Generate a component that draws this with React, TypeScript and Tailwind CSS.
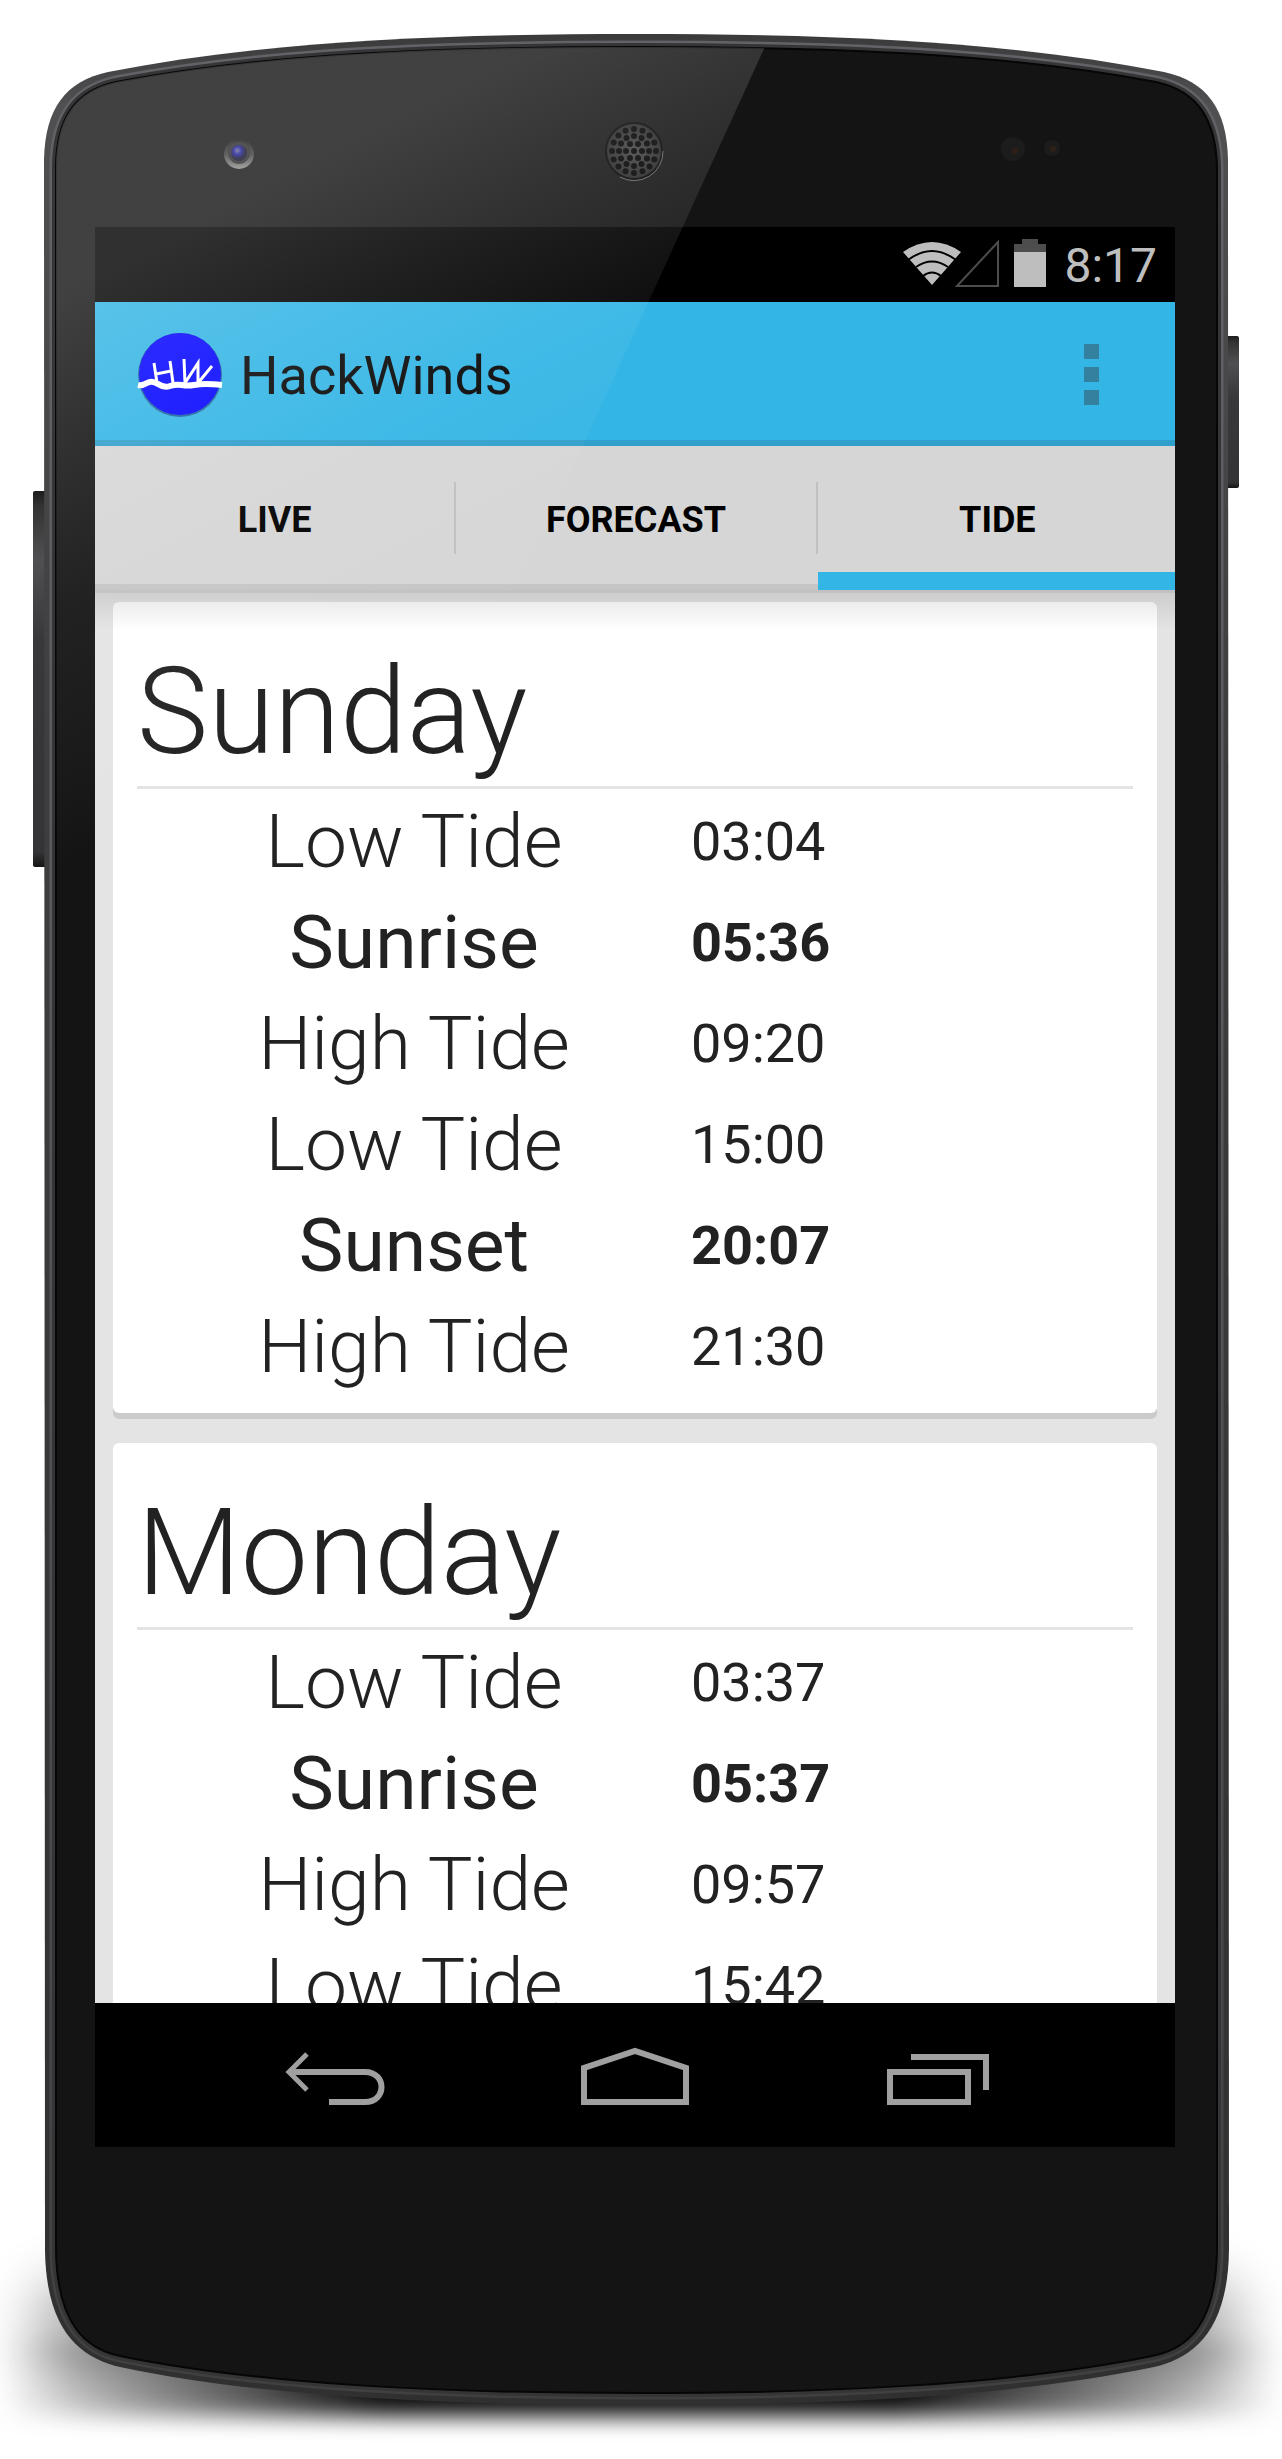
const ROBOTO = "font-['Roboto',sans-serif]";

type Entry = { label: string; time: string; sun?: boolean };
type Day = { name: string; entries: Entry[] };

const days: Day[] = [
  {
    name: 'Sunday',
    entries: [
      { label: 'Low Tide', time: '03:04' },
      { label: 'Sunrise', time: '05:36', sun: true },
      { label: 'High Tide', time: '09:20' },
      { label: 'Low Tide', time: '15:00' },
      { label: 'Sunset', time: '20:07', sun: true },
      { label: 'High Tide', time: '21:30' },
    ],
  },
  {
    name: 'Monday',
    entries: [
      { label: 'Low Tide', time: '03:37' },
      { label: 'Sunrise', time: '05:37', sun: true },
      { label: 'High Tide', time: '09:57' },
      { label: 'Low Tide', time: '15:42' },
    ],
  },
];

const tabs = ['LIVE', 'FORECAST', 'TIDE'];

const OUTER =
  'M44 160 C45 108 66 81 108 72 C260 42 430 34 636 34 C842 34 1012 42 1164 72 C1206 81 1227 108 1228 160 L1229 2250 C1228 2330 1194 2358 1154 2367 C1010 2397 830 2405 638 2405 C445 2405 260 2397 120 2367 C80 2358 46 2330 45 2250 Z';
const FACE =
  'M56 168 C56 120 74 91 116 82 C265 54 430 47 636 47 C842 47 1006 54 1156 82 C1198 91 1216 120 1217 168 L1217 2250 C1216 2324 1188 2349 1152 2356 C1010 2385 830 2393 638 2393 C445 2393 262 2385 120 2356 C86 2349 57 2324 56 2250 Z';

const rings = [
  { r: 0, n: 1 },
  { r: 8, n: 6 },
  { r: 15, n: 12 },
  { r: 22, n: 16 },
];
const holes = rings.flatMap(({ r, n }) =>
  Array.from({ length: n }, (_, i) => {
    const a = (i * 2 * Math.PI) / n;
    return { x: 634 + r * Math.cos(a), y: 151 + r * Math.sin(a) };
  }),
);

function DeviceBody() {
  return (
    <svg
      aria-hidden="true"
      viewBox="0 0 1282 2459"
      preserveAspectRatio="none"
      className="absolute inset-0 h-full w-full"
    >
      <defs>
        <linearGradient id="button" x1="0" y1="0" x2="0" y2="1">
          <stop offset="0" stopColor="#1c1c1c" />
          <stop offset="0.04" stopColor="#333" />
          <stop offset="0.18" stopColor="#505052" />
          <stop offset="0.4" stopColor="#38383a" />
          <stop offset="0.96" stopColor="#343436" />
          <stop offset="1" stopColor="#151515" />
        </linearGradient>
        <linearGradient id="rim" x1="0" y1="0" x2="0" y2="1">
          <stop offset="0" stopColor="#3a3a3b" />
          <stop offset="0.03" stopColor="#505053" />
          <stop offset="0.3" stopColor="#3e3e40" />
          <stop offset="1" stopColor="#303031" />
        </linearGradient>
        <linearGradient id="shine" x1="0" y1="0" x2="0" y2="1">
          <stop offset="0" stopColor="#636367" />
          <stop offset="0.4" stopColor="#59595d" />
          <stop offset="1" stopColor="#404041" />
        </linearGradient>
        <linearGradient id="fade" x1="0" y1="0" x2="1" y2="0">
          <stop offset="0" stopColor="#000" stopOpacity="0" />
          <stop offset="0.12" stopColor="#000" stopOpacity="0.4" />
          <stop offset="0.3" stopColor="#000" stopOpacity="0.95" />
          <stop offset="0.7" stopColor="#000" stopOpacity="0.95" />
          <stop offset="0.88" stopColor="#000" stopOpacity="0.4" />
          <stop offset="1" stopColor="#000" stopOpacity="0" />
        </linearGradient>
        <radialGradient id="speaker">
          <stop offset="0" stopColor="#454545" />
          <stop offset="1" stopColor="#262626" />
        </radialGradient>
        <radialGradient id="lens" cx="0.4" cy="0.35">
          <stop offset="0" stopColor="#6c6f9c" />
          <stop offset="0.5" stopColor="#1c1c96" />
          <stop offset="1" stopColor="#14142c" />
        </radialGradient>
        <linearGradient id="lensRing" x1="0" y1="0" x2="0" y2="1">
          <stop offset="0" stopColor="#161616" />
          <stop offset="0.5" stopColor="#3b3b3b" />
          <stop offset="1" stopColor="#8d8d8b" />
        </linearGradient>
        <filter id="soft" x="-20%" y="-60%" width="140%" height="220%">
          <feGaussianBlur stdDeviation="11" />
        </filter>
        <filter id="softer" x="-20%" y="-100%" width="140%" height="300%">
          <feGaussianBlur stdDeviation="28" />
        </filter>
      </defs>
      <rect x="34" y="2280" width="1206" height="96" rx="40" fill="#000" opacity="0.32" filter="url(#softer)" />
      <rect x="0" y="2340" width="1282" height="76" fill="url(#fade)" filter="url(#soft)" />
      <rect x="33" y="491" width="14" height="376" rx="2" fill="url(#button)" />
      <rect x="1226" y="336" width="13" height="152" rx="2" fill="url(#button)" />
      <path d={OUTER} fill="url(#rim)" />
      <path d={FACE} fill="none" stroke="url(#shine)" strokeWidth="13" />
      <path d={FACE} fill="none" stroke="#353537" strokeWidth="8" />
      <path d={FACE} fill="#141414" stroke="#060606" strokeWidth="2" />
      <circle cx="239" cy="154" r="15" fill="url(#lensRing)" />
      <circle cx="239" cy="153" r="11" fill="#2c2c2e" />
      <circle cx="239" cy="153" r="8" fill="url(#lens)" />
      <circle cx="634" cy="151" r="28" fill="url(#speaker)" stroke="#050505" strokeWidth="2" />
      <path d="M620 177 A29 29 0 0 0 663 151" fill="none" stroke="#666" strokeWidth="1" />
      {holes.map((h, i) => (
        <circle key={i} cx={h.x} cy={h.y} r="3" fill="#000" />
      ))}
      <circle cx="1013" cy="149" r="12" fill="#1c1c1c" />
      <circle cx="1015" cy="151" r="3" fill="#2e1f17" />
      <circle cx="1052" cy="148" r="8" fill="#1c1c1c" />
      <circle cx="1053" cy="149" r="3" fill="#2e1f17" />
    </svg>
  );
}

function Glare() {
  return (
    <svg
      aria-hidden="true"
      viewBox="0 0 1282 2459"
      preserveAspectRatio="none"
      className="pointer-events-none absolute inset-0 h-full w-full"
    >
      <defs>
        <linearGradient id="glare" gradientUnits="userSpaceOnUse" x1="70" y1="290" x2="302" y2="745">
          <stop offset="0" stopColor="#fff" stopOpacity="0.19" />
          <stop offset="0.26" stopColor="#fff" stopOpacity="0.125" />
          <stop offset="0.54" stopColor="#fff" stopOpacity="0.06" />
          <stop offset="0.8" stopColor="#fff" stopOpacity="0.03" />
          <stop offset="1" stopColor="#fff" stopOpacity="0" />
        </linearGradient>
        <clipPath id="face">
          <path d={FACE} />
        </clipPath>
      </defs>
      <path d="M50 40 H768 L330 1000 H50 Z" fill="url(#glare)" clipPath="url(#face)" />
    </svg>
  );
}

function StatusBar() {
  return (
    <div className="flex h-[75px] shrink-0 items-center justify-end bg-black pb-[3px] pr-[18px] text-[#bebebe]">
      <svg role="img" aria-label="Wi-Fi" viewBox="0 0 60 48" className="h-12 w-[60px]">
        <path d="M1 13 Q30 -7 59 13 L30 46 Z" fill="currentColor" />
        <g fill="none" stroke="#000" strokeWidth="2">
          <path d="M6 21 Q30 3 54 21" />
          <path d="M14 28 Q30 17 46 28" />
          <path d="M21 37 Q30 30 39 37" />
        </g>
      </svg>
      <svg role="img" aria-label="No signal" viewBox="0 0 46 50" className="-ml-2 h-[50px] w-[46px]">
        <path d="M3 48 H44 V4 Z" fill="none" stroke="#4d4d4d" strokeWidth="2" />
      </svg>
      <svg role="img" aria-label="Battery" viewBox="0 0 32 48" className="ml-[14px] h-12 w-8">
        <path d="M0 5 H8 V0 H24 V5 H32 V13 H0 Z" fill="#4d4d4d" />
        <rect y="13" width="32" height="35" fill="currentColor" />
      </svg>
      <span className="ml-[18px] pt-1.5 text-[48px] leading-none">8:17</span>
    </div>
  );
}

function Logo() {
  return (
    <svg aria-hidden="true" viewBox="0 0 88 88" className="h-[88px] w-[88px]">
      <circle cx="44" cy="45" r="42" fill="#0d1f66" opacity="0.55" />
      <circle cx="44" cy="44" r="41" fill="#0505ff" />
      <path
        d="M2 55 Q6 56 11 53 T22 54 T34 56 T46 55 T58 55 T70 54 T86 55"
        fill="none"
        stroke="#fff"
        strokeWidth="6"
      />
      <g fill="none" stroke="#fff" strokeWidth="3">
        <path d="M18 33 L21 53 M34 31 L37 53 M20 44 L35 41" />
        <path d="M48 29 L49 53 L62 33 V53 L76 36" />
      </g>
    </svg>
  );
}

function ActionBar() {
  return (
    <header className="flex h-36 shrink-0 items-center border-b-[6px] border-[#2f9fcb] bg-[#33b5e5] pl-[41px] pr-[52px] pt-1.5">
      <Logo />
      <h1 className="ml-4 flex-1 pt-1 text-[54px] leading-[64px] text-[#080808]">HackWinds</h1>
      <button type="button" aria-label="More options" className="flex flex-col gap-2 px-6 py-3">
        <span className="h-[15px] w-[15px] bg-[#34809f]" />
        <span className="h-[15px] w-[15px] bg-[#34809f]" />
        <span className="h-[15px] w-[15px] bg-[#34809f]" />
      </button>
    </header>
  );
}

function Tabs() {
  return (
    <nav className="flex h-36 shrink-0 overflow-hidden bg-[#d6d6d6]">
      {tabs.map((tab) => {
        const active = tab === 'TIDE';
        return (
          <button
            key={tab}
            type="button"
            aria-pressed={active}
            className="flex w-[calc((100%+4px)/3)] shrink-0 flex-col text-[36px] font-bold text-black"
          >
            <span className="mt-9 flex h-[72px] w-full items-center justify-center border-r-2 border-[#c0c0c0] pt-1">
              {tab}
            </span>
            <span className="flex w-full flex-1 items-end">
              <span className={active ? 'h-[18px] w-full bg-[#33b5e5]' : 'h-[6px] w-full bg-[#c5c5c5]'} />
            </span>
          </button>
        );
      })}
    </nav>
  );
}

function DayCard({ day }: { day: Day }) {
  return (
    <section className="rounded-md bg-white px-6 pb-4 pt-9 shadow-[0_6px_0_#cbcbcb]">
      <h2 className="border-b-[3px] border-[#e4e4e4] text-[120px] font-light leading-[148px] text-[#222]">
        {day.name}
      </h2>
      <table className="mt-[2px] w-full table-fixed border-collapse text-[#222]">
        <tbody>
          {day.entries.map((e, i) => (
            <tr key={i} className="h-[101px]">
              <th
                scope="row"
                className={`w-[554px] p-0 text-center text-[75px] leading-[101px] ${e.sun ? 'font-normal' : 'font-light'}`}
              >
                {e.label}
              </th>
              <td className={`p-0 text-[54px] leading-[99px] ${e.sun ? 'font-bold' : 'font-normal'}`}>{e.time}</td>
            </tr>
          ))}
        </tbody>
      </table>
    </section>
  );
}

function NavBar() {
  return (
    <nav className="grid h-36 shrink-0 grid-cols-3 items-center bg-black px-[90px] text-[#a0a0a0]">
      <button type="button" aria-label="Back" className="flex justify-center">
        <svg viewBox="0 0 108 72" className="h-[72px] w-[108px]" fill="none" stroke="currentColor" strokeWidth="6">
          <path d="M26 15 L8 33 L26 51" strokeWidth="5" />
          <path d="M8 33 H84 C106 33 106 63 84 63 H48" />
        </svg>
      </button>
      <button type="button" aria-label="Home" className="flex justify-center">
        <svg viewBox="0 0 108 72" className="h-[72px] w-[108px]" fill="none" stroke="currentColor" strokeWidth="6">
          <path d="M3 63 V29 L54 12 L105 29 V63 Z" />
        </svg>
      </button>
      <button type="button" aria-label="Recent apps" className="flex justify-center">
        <svg viewBox="0 0 108 72" className="h-[72px] w-[108px]" fill="none" stroke="currentColor" strokeWidth="6">
          <path d="M9 33 H87 V63 H9 Z" />
          <path d="M30 18 H105 V51" />
        </svg>
      </button>
    </nav>
  );
}

export default function App() {
  return (
    <div className={`${ROBOTO} w-full bg-white`}>
      <div className="relative pb-[312px] pl-[95px] pr-[107px] pt-[227px]">
        <DeviceBody />
        <div className="relative flex aspect-[9/16] flex-col overflow-hidden bg-[#e4e4e4]">
          <StatusBar />
          <ActionBar />
          <Tabs />
          <main className="relative min-h-0 flex-1">
            <div className="flex h-full flex-col gap-[30px] overflow-y-auto px-[18px] py-3 [scrollbar-width:none]">
              {days.map((d) => (
                <DayCard key={d.name} day={d} />
              ))}
            </div>
            <div className="pointer-events-none absolute inset-x-0 top-0 h-10 border-t-[3px] border-black/15 bg-linear-to-b from-black/10 to-transparent" />
          </main>
          <NavBar />
        </div>
        <Glare />
      </div>
    </div>
  );
}
